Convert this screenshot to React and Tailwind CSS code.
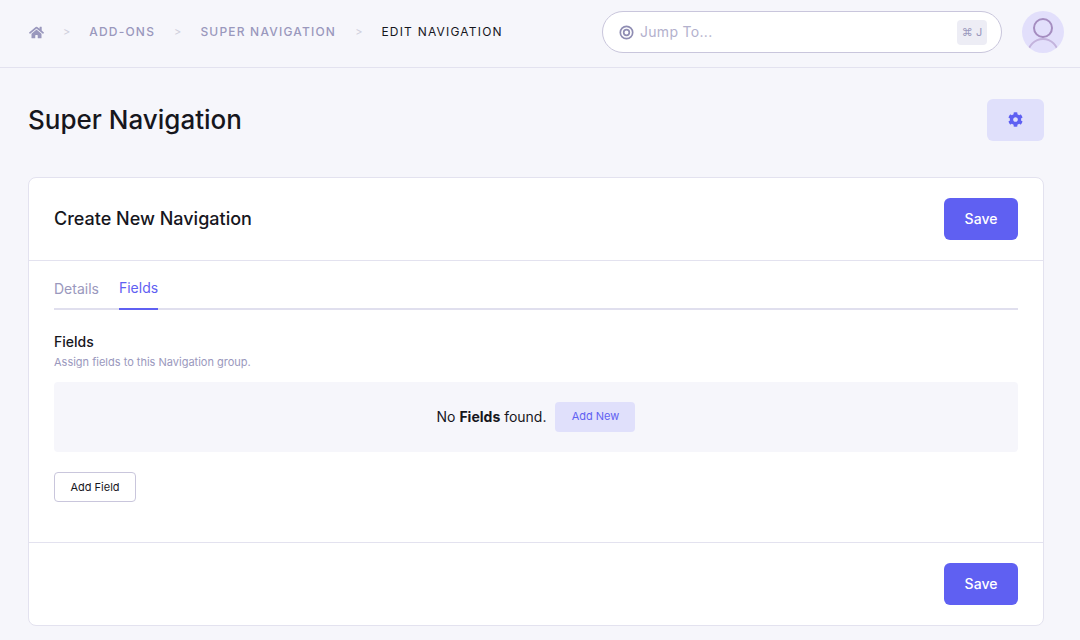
import { FaHome, FaCog } from 'react-icons/fa';

function Crumb({ children, current }) {
  return (
    <span className={`text-xs tracking-[1.2px] uppercase ${current ? 'text-[#16161d]' : 'text-[#9a98bd] font-medium'}`}>
      {children}
    </span>
  );
}

function Sep() {
  return <span className="mx-[19px] text-[11px] text-[#cfcfdc]">&gt;</span>;
}

function SaveButton() {
  return (
    <button className="h-[42px] w-[74px] rounded-md bg-[#5f60f2] text-sm font-medium text-white">
      Save
    </button>
  );
}

export default function App() {
  return (
    <div className="h-[640px] w-[1080px] overflow-hidden bg-[#f6f6fb] font-['Inter',sans-serif] text-[#16161d]">
      {/* Top bar */}
      <header className="flex h-[68px] items-center border-b border-[#e3e2ef] pb-[3px] pl-[29px] pr-4">
        <div className="flex flex-1 items-center">
          <FaHome className="text-[15px] text-[#9a98bd]" />
          <Sep />
          <Crumb>Add-ons</Crumb>
          <Sep />
          <Crumb>Super Navigation</Crumb>
          <Sep />
          <Crumb current>Edit Navigation</Crumb>
        </div>
        <div className="flex h-[42px] w-[400px] items-center rounded-full border border-[#c9c6dc] bg-white pl-4 pr-[14px]">
          <svg viewBox="0 0 16 16" className="h-[15px] w-[15px] text-[#8f8db3]" fill="none" stroke="currentColor">
            <circle cx="8" cy="8" r="6.6" strokeWidth="1.8" />
            <circle cx="8" cy="8" r="3" strokeWidth="1.8" />
          </svg>
          <span className="ml-[6px] flex-1 text-sm tracking-[0.3px] text-[#b3b1cd]">Jump To...</span>
          <span className="flex h-[25px] w-[30px] items-center justify-center rounded bg-[#ededf5] text-[11px] text-[#9a98bd]">
            ⌘ J
          </span>
        </div>
        <div className="ml-5 h-[42px] w-[42px] overflow-hidden rounded-full bg-[#e2dffb]">
          <svg viewBox="0 0 42 42" className="h-full w-full" fill="none" stroke="#a58dc0" strokeWidth="2">
            <circle cx="21" cy="17" r="9" />
            <circle cx="21" cy="43" r="15" stroke="#c3b3dc" />
          </svg>
        </div>
      </header>

      <main className="px-9 pl-7">
        {/* Page heading */}
        <div className="flex h-[109px] items-center justify-between pb-[6px]">
          <h1 className="text-[26px] font-medium">Super Navigation</h1>
          <button className="flex h-[42px] w-[57px] items-center justify-center rounded-md bg-[#e0e0fb]">
            <FaCog className="text-[15px] text-[#5f60f2]" />
          </button>
        </div>

        {/* Card */}
        <section className="h-[449px] w-[1016px] rounded-lg border border-[#e3e2ef] bg-white">
          <div className="flex h-[83px] items-center justify-between border-b border-[#e3e2ef] px-[25px]">
            <h2 className="text-lg font-medium">Create New Navigation</h2>
            <SaveButton />
          </div>

          <div className="h-[282px] border-b border-[#e3e2ef] px-[25px]">
            <div className="flex h-[49px] gap-5 border-b-2 border-[#e0dfee] text-sm">
              <span className="flex h-[49px] items-center pt-[6px] text-[#9a98bd]">Details</span>
              <span className="flex h-[49px] items-center border-b-2 border-[#5f60f2] pt-[6px] text-[#5f60f2]">Fields</span>
            </div>

            <h3 className="mt-[22px] text-sm font-medium leading-5">Fields</h3>
            <p className="mt-[2px] text-[11px] leading-4 text-[#9a98bd]">Assign fields to this Navigation group.</p>

            <div className="mt-3 flex h-[70px] items-center justify-center rounded bg-[#f6f6fb] text-sm">
              <span>
                No <b className="font-bold">Fields</b> found.
              </span>
              <button className="ml-[9px] h-[30px] w-20 rounded bg-[#e0e0fb] text-[11px] text-[#5f60f2]">Add New</button>
            </div>

            <button className="mt-5 h-[30px] w-[82px] rounded border border-[#c9c6dc] bg-white text-[11px]">Add Field</button>
          </div>

          <div className="flex justify-end px-[25px] pt-5">
            <SaveButton />
          </div>
        </section>
      </main>
    </div>
  );
}
